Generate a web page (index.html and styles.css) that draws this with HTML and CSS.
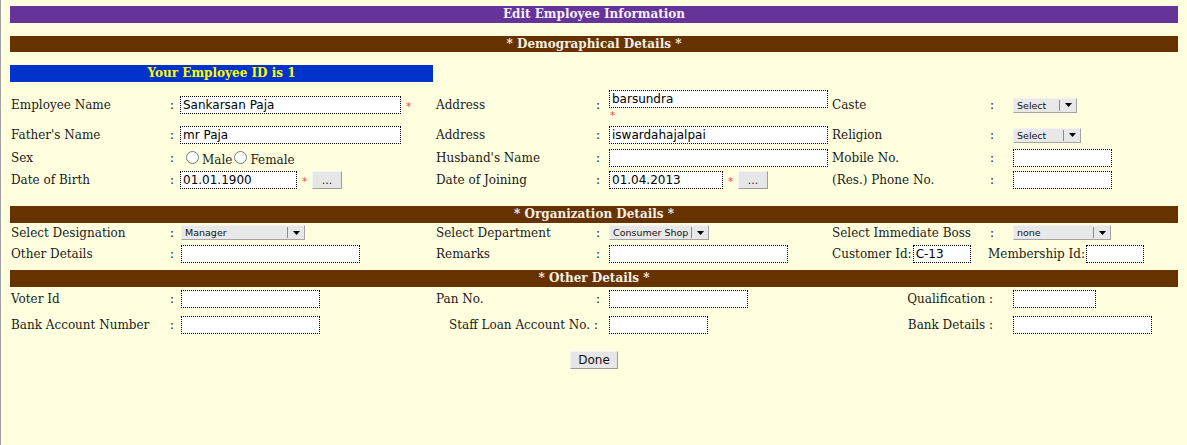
FILE: index.html
```html
<!DOCTYPE html>
<html>
<head>
<meta charset="utf-8">
<link rel="stylesheet" href="styles.css">
</head>
<body>
<div class="page">
  <div class="bar bar-purple">Edit Employee Information</div>
  <div class="bar bar-brown bar-first">* Demographical Details *</div>
  <div class="idbar">Your Employee ID is 1</div>

  <div class="grid demo">
    <div class="c lbl">Employee Name</div>
    <div class="c colon">:</div>
    <div class="c"><span class="inp w221">Sankarsan Paja</span><span class="req">*</span></div>
    <div class="c lbl">Address</div>
    <div class="c colon">:</div>
    <div class="c stack"><span class="inp w219">barsundra</span><span class="req req-under">*</span></div>
    <div class="c lbl">Caste</div>
    <div class="c colon">:</div>
    <div class="c"><span class="sel w64"><span class="sel-t">Select</span><span class="sel-a"><svg width="7" height="4" viewBox="0 0 7 4"><path d="M0 0h7L3.5 4z" fill="#000"/></svg></span></span></div>

    <div class="c lbl">Father's Name</div>
    <div class="c colon">:</div>
    <div class="c"><span class="inp w221">mr Paja</span></div>
    <div class="c lbl">Address</div>
    <div class="c colon">:</div>
    <div class="c"><span class="inp w219">iswardahajalpai</span></div>
    <div class="c lbl">Religion</div>
    <div class="c colon">:</div>
    <div class="c"><span class="sel w68"><span class="sel-t">Select</span><span class="sel-a"><svg width="7" height="4" viewBox="0 0 7 4"><path d="M0 0h7L3.5 4z" fill="#000"/></svg></span></span></div>

    <div class="c lbl">Sex</div>
    <div class="c colon">:</div>
    <div class="c radios"><span class="radio"></span><span class="rtxt">Male</span><span class="radio"></span><span class="rtxt">Female</span></div>
    <div class="c lbl">Husband's Name</div>
    <div class="c colon">:</div>
    <div class="c"><span class="inp w219"></span></div>
    <div class="c lbl">Mobile No.</div>
    <div class="c colon">:</div>
    <div class="c"><span class="inp w99"></span></div>

    <div class="c lbl">Date of Birth</div>
    <div class="c colon">:</div>
    <div class="c"><span class="inp w117">01.01.1900</span><span class="req">*</span><span class="btn dots">...</span></div>
    <div class="c lbl">Date of Joining</div>
    <div class="c colon">:</div>
    <div class="c"><span class="inp w114">01.04.2013</span><span class="req">*</span><span class="btn dots">...</span></div>
    <div class="c lbl">(Res.) Phone No.</div>
    <div class="c colon">:</div>
    <div class="c"><span class="inp w99"></span></div>
  </div>

  <div class="bar bar-brown bar-org">* Organization Details *</div>

  <div class="grid org">
    <div class="c lbl">Select Designation</div>
    <div class="c colon">:</div>
    <div class="c p3"><span class="sel w124"><span class="sel-t">Manager</span><span class="sel-a"><svg width="7" height="4" viewBox="0 0 7 4"><path d="M0 0h7L3.5 4z" fill="#000"/></svg></span></span></div>
    <div class="c lbl">Select Department</div>
    <div class="c colon">:</div>
    <div class="c"><span class="sel w100"><span class="sel-t">Consumer Shop</span><span class="sel-a"><svg width="7" height="4" viewBox="0 0 7 4"><path d="M0 0h7L3.5 4z" fill="#000"/></svg></span></span></div>
    <div class="c lbl">Select Immediate Boss</div>
    <div class="c colon">:</div>
    <div class="c"><span class="sel w98"><span class="sel-t">none</span><span class="sel-a"><svg width="7" height="4" viewBox="0 0 7 4"><path d="M0 0h7L3.5 4z" fill="#000"/></svg></span></span></div>

    <div class="c lbl">Other Details</div>
    <div class="c colon">:</div>
    <div class="c p3"><span class="inp w179"></span></div>
    <div class="c lbl">Remarks</div>
    <div class="c colon">:</div>
    <div class="c"><span class="inp w179"></span></div>
    <div class="c lbl"><span class="lbl-in">Customer Id:</span><span class="inp w58">C-13</span></div>
    <div class="c lbl span2 p0"><span class="lbl-in">Membership Id:</span><span class="inp w58"></span></div>
  </div>

  <div class="bar bar-brown bar-other">* Other Details *</div>

  <div class="grid other">
    <div class="c lbl">Voter Id</div>
    <div class="c colon">:</div>
    <div class="c p3"><span class="inp w139"></span></div>
    <div class="c lbl">Pan No.</div>
    <div class="c colon">:</div>
    <div class="c"><span class="inp w139"></span></div>
    <div class="c lbl span2 right r1">Qualification :</div>
    <div class="c"><span class="inp w83"></span></div>

    <div class="c lbl">Bank Account Number</div>
    <div class="c colon">:</div>
    <div class="c p3"><span class="inp w139"></span></div>
    <div class="c lbl span2 right r2">Staff Loan Account No. :</div>
    <div class="c"><span class="inp w99"></span></div>
    <div class="c lbl span2 right r1">Bank Details :</div>
    <div class="c"><span class="inp w139"></span></div>
  </div>

  <div class="actions"><span class="btn done">Done</span></div>
</div>
</body>
</html>
```

FILE: styles.css
```css
html, body {
  margin: 0;
  padding: 0;
  background: #ffffdf;
}
body {
  height: 445px;
  border-left: 1px solid #a0a0a0;
  box-sizing: border-box;
  font-family: "DejaVu Serif", serif;
  font-size: 12px;
  color: #1a1a1a;
}
.page {
  padding: 6px 9px 0 9px;
}
.bar {
  height: 17px;
  line-height: 17px;
  text-align: center;
  font-weight: bold;
  font-size: 12px;
  color: #f4efe4;
}
.bar-purple { background: #663399; color: #f4f0f8; }
.bar-brown { background: #663300; }
.bar-first { margin-top: 13px; height: 16px; line-height: 17px; }
.idbar {
  margin-top: 13px;
  width: 423px;
  height: 17px;
  line-height: 17px;
  background: #0033cc;
  color: #ffff00;
  font-weight: bold;
  font-size: 12px;
  text-align: center;
}
.grid {
  display: grid;
  grid-template-columns: 159px 10px 256px 160px 13px 223px 158px 23px 167px;
  margin-left: -1px;
  align-items: center;
}
.demo { margin-top: 5px; grid-template-rows: 36px 24px 21px 24px; }
.bar-org { margin-top: 14px; }
.org { grid-template-rows: 19px 24px; }
.bar-other { margin-top: 4px; }
.other { grid-template-rows: 24px 28px; }
.c {
  padding-left: 2px;
  display: flex;
  align-items: center;
  white-space: nowrap;
}
.p3 { padding-left: 3px; }
.p0 { padding-left: 0; }
.span2 { grid-column: span 2; }
.right { justify-content: flex-end; }
.r1 { padding-right: 18px; }
.r2 { padding-right: 9px; }
.stack {
  flex-direction: column;
  align-items: flex-start;
}
.inp {
  display: inline-block;
  box-sizing: border-box;
  height: 18px;
  border: 1px dotted #000;
  background: #fff;
  font-family: "DejaVu Sans", sans-serif;
  font-size: 12px;
  line-height: 16px;
  padding-left: 2px;
  color: #000;
  overflow: hidden;
}
.w221 { width: 221px; }
.w219 { width: 219px; }
.w117 { width: 117px; }
.w114 { width: 114px; }
.w99 { width: 99px; }
.w179 { width: 179px; }
.w58 { width: 58px; }
.w139 { width: 139px; }
.w83 { width: 83px; }
.req {
  color: #ff3a3a;
  font-family: "DejaVu Sans", sans-serif;
  font-size: 10px;
  margin-left: 5px;
  margin-right: 5px;
  position: relative;
  top: 1px;
}
.req-under {
  margin-left: 1px;
  line-height: 12px;
  top: 2px;
}
.sel {
  display: inline-flex;
  box-sizing: border-box;
  height: 15px;
  background: #e8e8e8;
  border: 1px solid;
  border-color: #f2f2f2 #a4a4a4 #a4a4a4 #f2f2f2;
  font-family: "DejaVu Sans", sans-serif;
  font-size: 9.5px;
  color: #111;
  align-items: center;
}
.sel-t {
  flex: 1;
  padding-left: 3px;
  overflow: hidden;
}
.sel-a {
  width: 16px;
  height: 11px;
  border-left: 1px solid #8a8a8a;
  display: flex;
  align-items: center;
  justify-content: center;
}
.w64 { width: 64px; }
.w68 { width: 68px; }
.w124 { width: 124px; }
.w100 { width: 100px; }
.w98 { width: 98px; }
.btn {
  display: inline-flex;
  align-items: center;
  justify-content: center;
  box-sizing: border-box;
  height: 18px;
  background: #e6e6e6;
  border: 1px solid;
  border-color: #f4f4f4 #9c9c9c #9c9c9c #f4f4f4;
  font-family: "DejaVu Sans", sans-serif;
  color: #111;
}
.dots { width: 30px; font-size: 11px; }
.radios { padding-left: 8px; }
.radio {
  display: inline-block;
  box-sizing: border-box;
  width: 13px;
  height: 13px;
  border: 1px solid #7a7a7a;
  border-radius: 50%;
  background: #fff;
}
.rtxt {
  margin-left: 3px;
  margin-right: 2px;
  position: relative;
  top: 2px;
}
.lbl-in { margin-right: 1px; }
.actions {
  margin-top: 12px;
  display: flex;
  justify-content: center;
}
.done {
  width: 48px;
  height: 18px;
  font-size: 12px;
}
```
